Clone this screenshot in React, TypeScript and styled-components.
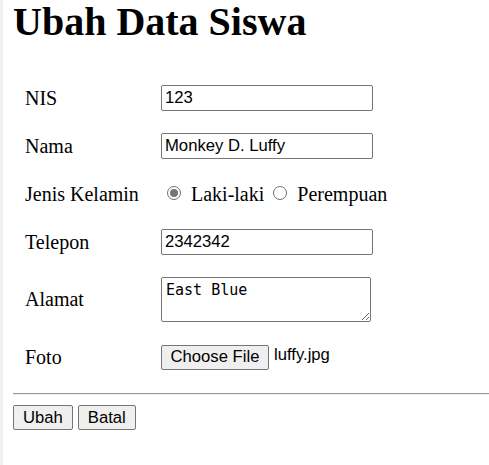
import styled, { createGlobalStyle } from 'styled-components';
import { useState } from 'react';

const GlobalStyle = createGlobalStyle`
    html, body {
        margin: 0;
        padding: 0;
        background: #ffffff;
    }
    body {
        font-family: 'Liberation Serif', 'Times New Roman', serif;
        color: #000000;
    }
`;

const UbahSiswaPage = () => {
    // data siswa
    const [nis, setNis] = useState('123');
    const [nama, setNama] = useState('Monkey D. Luffy');
    const [jk, setJk] = useState('L');
    const [telepon, setTelepon] = useState('2342342');
    const [alamat, setAlamat] = useState('East Blue');

    return (
        <Page>
            <GlobalStyle />
            <Title>Ubah Data Siswa</Title>
            <FormGrid>
                <Label>NIS</Label>
                <Field>
                    <TextInput value={nis} onChange={(e) => setNis(e.target.value)} />
                </Field>

                <Label>Nama</Label>
                <Field>
                    <TextInput value={nama} onChange={(e) => setNama(e.target.value)} />
                </Field>

                <Label>Jenis Kelamin</Label>
                <Field>
                    <RadioLabel>
                        <Radio
                            type="radio"
                            name="jk"
                            checked={jk === 'L'}
                            onChange={() => setJk('L')}
                        />
                        Laki-laki
                    </RadioLabel>
                    <RadioLabel>
                        <Radio
                            type="radio"
                            name="jk"
                            checked={jk === 'P'}
                            onChange={() => setJk('P')}
                        />
                        Perempuan
                    </RadioLabel>
                </Field>

                <Label>Telepon</Label>
                <Field>
                    <TextInput value={telepon} onChange={(e) => setTelepon(e.target.value)} />
                </Field>

                <Label>Alamat</Label>
                <Field>
                    <TextArea value={alamat} onChange={(e) => setAlamat(e.target.value)} />
                </Field>

                <Label>Foto</Label>
                <Field>
                    <FileButton type="button">Choose File</FileButton>
                    <FileName>luffy.jpg</FileName>
                </Field>
            </FormGrid>
            <Divider />
            <Actions>
                <Button type="button">Ubah</Button>
                <Button type="button">Batal</Button>
            </Actions>
        </Page>
    );
};

export default UbahSiswaPage;

const Page = styled.div`
    min-height: 465px;
    box-sizing: border-box;
    border-left: 3px solid #f0f0f0;
    padding-left: 10px;
`;

const Title = styled.h1`
    margin: 0;
    font-size: 40px;
    line-height: 44px;
    font-weight: bold;
`;

const FormGrid = styled.div`
    display: grid;
    grid-template-columns: 148px 1fr;
    margin-top: 30px;
`;

const Label = styled.div`
    display: flex;
    align-items: center;
    padding: 11px 0 11px 12px;
    font-size: 20px;
`;

const Field = styled.div`
    display: flex;
    align-items: center;
    min-height: 26px;
    padding: 11px 0;
    font-size: 20px;
`;

const controlFont = `
    font-family: 'Liberation Sans', Arial, sans-serif;
    font-size: 16.67px;
    color: #000000;
`;

const TextInput = styled.input`
    ${controlFont}
    box-sizing: border-box;
    width: 212px;
    height: 26px;
    padding: 1px 3px;
    margin: 0;
    border: 1px solid #767676;
    border-radius: 2px;
    outline: none;
`;

const TextArea = styled.textarea`
    box-sizing: border-box;
    width: 210px;
    height: 45px;
    margin: 0;
    padding: 3px 4px;
    font-family: 'DejaVu Sans Mono', 'Liberation Mono', monospace;
    font-size: 15px;
    line-height: 18px;
    border: 1px solid #767676;
    border-radius: 2px;
    outline: none;
    resize: both;
`;

const RadioLabel = styled.label`
    display: inline-flex;
    align-items: center;
    font-size: 20px;
    margin-right: 3px;
`;

const Radio = styled.input`
    appearance: none;
    width: 14px;
    height: 14px;
    margin: 0 10px 2px 6px;
    border: 1px solid #707070;
    border-radius: 50%;
    background: #ffffff;
    display: grid;
    place-content: center;

    &:checked::before {
        content: '';
        width: 8px;
        height: 8px;
        border-radius: 50%;
        background: #767676;
    }
`;

const FileButton = styled.button`
    ${controlFont}
    box-sizing: border-box;
    width: 108px;
    height: 25px;
    margin: 0;
    padding: 0 8px;
    background: #efefef;
    border: 1px solid #767676;
    border-radius: 2px;
`;

const FileName = styled.span`
    ${controlFont}
    margin-left: 5px;
    margin-top: -4px;
`;

const Divider = styled.hr`
    margin: 12px 0 10px;
    border: none;
    border-top: 1px solid #9a9a9a;
    border-bottom: 1px solid #eeeeee;
`;

const Actions = styled.div`
    display: flex;
    gap: 5px;
`;

const Button = styled.button`
    ${controlFont}
    box-sizing: border-box;
    height: 25px;
    margin: 0;
    padding: 0 9px;
    background: #efefef;
    border: 1px solid #767676;
    border-radius: 2px;
`;
